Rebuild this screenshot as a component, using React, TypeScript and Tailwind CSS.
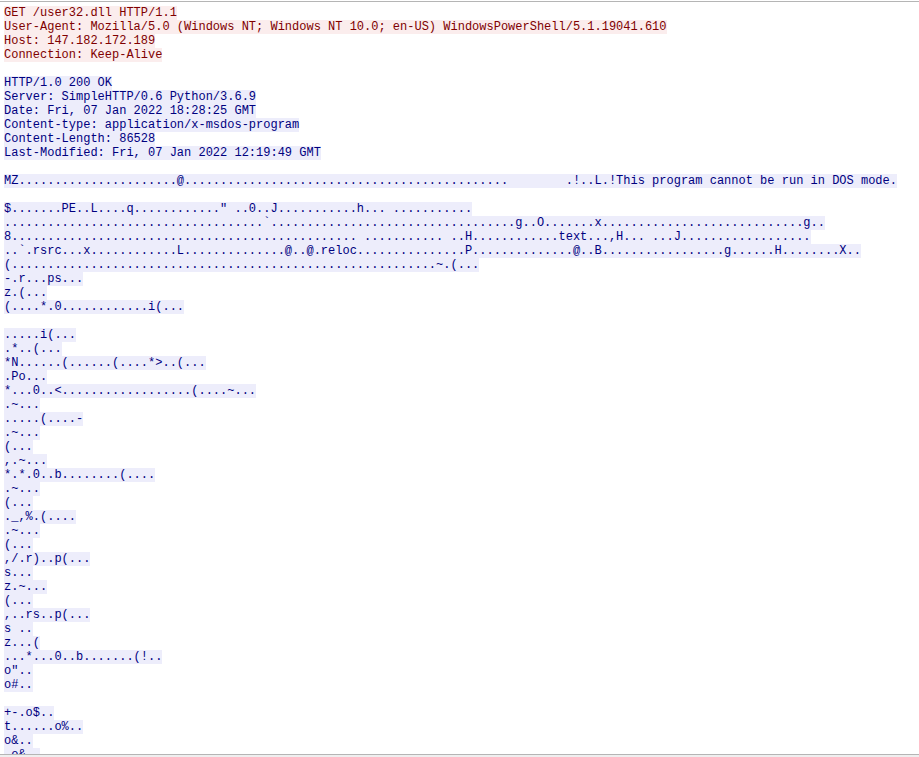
import React from "react";

const d = (n: number) => ".".repeat(n);

type Line = { t: string; c: "c" | "s" | "b" };

const client: string[] = [
  "GET /user32.dll HTTP/1.1",
  "User-Agent: Mozilla/5.0 (Windows NT; Windows NT 10.0; en-US) WindowsPowerShell/5.1.19041.610",
  "Host: 147.182.172.189",
  "Connection: Keep-Alive",
];

const server: string[] = [
  "",
  "HTTP/1.0 200 OK",
  "Server: SimpleHTTP/0.6 Python/3.6.9",
  "Date: Fri, 07 Jan 2022 18:28:25 GMT",
  "Content-type: application/x-msdos-program",
  "Content-Length: 86528",
  "Last-Modified: Fri, 07 Jan 2022 12:19:49 GMT",
  "",
  "MZ" + d(22) + "@" + d(45) + "        " + ".!..L.!This program cannot be run in DOS mode.",
  "",
  "$" + d(7) + "PE..L" + d(4) + "q" + d(12) + '" ..0..J' + d(11) + "h... " + d(11),
  d(36) + "`" + d(34) + "g..O" + d(7) + "x" + d(28) + "g..",
  "8" + d(48) + " " + d(11) + " ..H" + d(12) + "text...,H... ...J" + d(18),
  "..`.rsrc...x" + d(12) + "L" + d(14) + "@..@.reloc" + d(15) + "P" + d(14) + "@..B" + d(17) + "g" + d(6) + "H" + d(8) + "X..",
  "(" + d(59) + "~.(...",
  "-.r...ps...",
  "z.(...",
  "(....*.0" + d(12) + "i(...",
  "",
  ".....i(...",
  ".*..(...",
  "*N......(......(....*>..(...",
  ".Po...",
  "*...0..<" + d(18) + "(....~...",
  ".~...",
  ".....(....-",
  ".~...",
  "(...",
  ",.~...",
  "*.*.0..b" + d(8) + "(....",
  ".~...",
  "(...",
  "._,%.(....",
  ".~...",
  "(...",
  ",/.r)..p(...",
  "s...",
  "z.~...",
  "(...",
  ",..rs..p(...",
  "s ..",
  "z...(",
  "...*...0..b" + d(7) + "(!..",
  'o"..',
  "o#..",
  "",
  "+-.o$..",
  "t......o%..",
  "o&..",
  ".o&..",
];

const lines: Line[] = [
  ...client.map((t) => ({ t, c: "c" as const })),
  ...server.map((t) => ({ t, c: t === "" ? ("b" as const) : ("s" as const) })),
];

export default function App() {
  return (
    <div className="w-[919px] h-[757px] bg-[#efefef] overflow-hidden flex flex-col">
      <div className="h-[1px] bg-white shrink-0" />
      <div
        className="h-[754px] shrink-0 bg-white border-t border-b border-[#b5b5b5] overflow-hidden pt-[4px] pl-[4px]"
        style={{ fontFamily: '"Liberation Mono", monospace' }}
      >
        {lines.map((l, i) => (
          <div
            key={i}
            className={
              l.c === "c"
                ? "h-[14px] leading-[14px] text-[12px] whitespace-pre w-fit bg-[#fbeded] text-[#7f0000]"
                : l.c === "s"
                ? "h-[14px] leading-[14px] text-[12px] whitespace-pre w-fit bg-[#ededfb] text-[#00007f]"
                : "h-[14px] leading-[14px] text-[12px] whitespace-pre"
            }
          >
            {l.t}
          </div>
        ))}
      </div>
    </div>
  );
}
